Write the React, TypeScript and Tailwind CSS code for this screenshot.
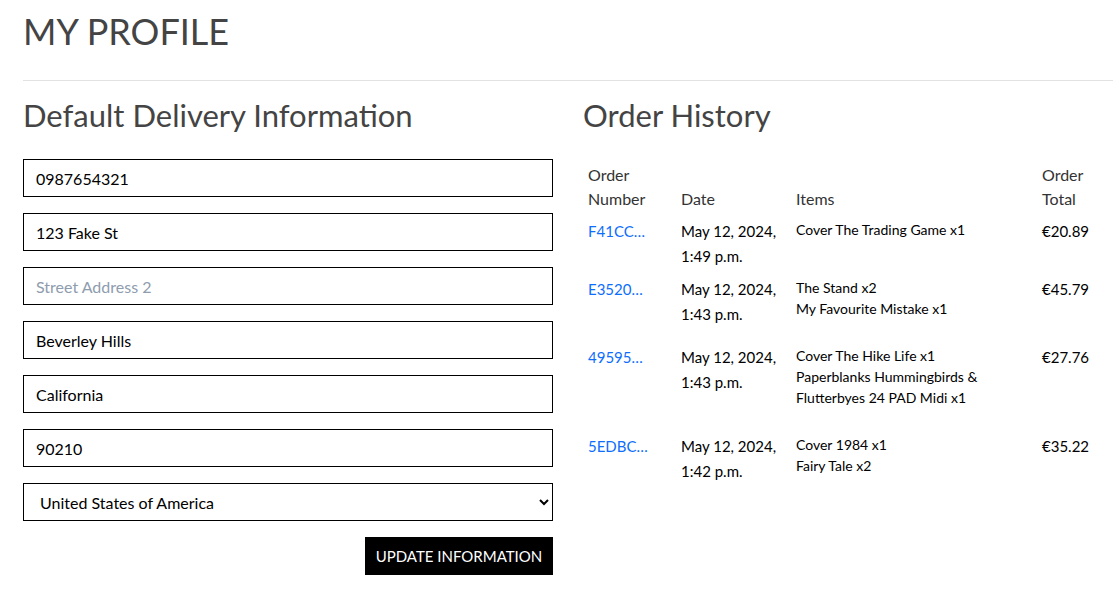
import { useState } from 'react';

const FONT = "font-['Lato','Noto_Sans',sans-serif]";

const orders = [
  { id: 'F41CC…', date: 'May 12, 2024,', time: '1:49 p.m.', items: ['Cover The Trading Game x1'], total: '€20.89' },
  { id: 'E3520…', date: 'May 12, 2024,', time: '1:43 p.m.', items: ['The Stand x2', 'My Favourite Mistake x1'], total: '€45.79' },
  {
    id: '49595…',
    date: 'May 12, 2024,',
    time: '1:43 p.m.',
    items: ['Cover The Hike Life x1', 'Paperblanks Hummingbirds &', 'Flutterbyes 24 PAD Midi x1'],
    total: '€27.76',
  },
  { id: '5EDBC…', date: 'May 12, 2024,', time: '1:42 p.m.', items: ['Cover 1984 x1', 'Fairy Tale x2'], total: '€35.22' },
];

function Field({ value, placeholder }: { value?: string; placeholder?: string }) {
  const [v, setV] = useState(value ?? '');
  return (
    <input
      value={v}
      placeholder={placeholder}
      onChange={(e) => setV(e.target.value)}
      className="h-[38px] w-full border border-black bg-white px-3 text-[16px] text-black outline-none placeholder:text-[#8e9cae]"
    />
  );
}

export default function App() {
  return (
    <div className={`${FONT} min-h-[596px] bg-white pl-[23px] pr-[6px] pt-[8px] text-[#212529]`}>
      <h1 className="text-[36px] leading-[46px] text-[#444]">MY PROFILE</h1>
      <hr className="mt-[26px] border-t border-[#e2e2e2]" />

      <div className="mt-[13px] grid grid-cols-2 gap-[30px]">
        <section>
          <h2 className="text-[31px] leading-[42px] text-[#444]">Default Delivery Information</h2>
          <form className="mt-[23px] flex flex-col gap-4" onSubmit={(e) => e.preventDefault()}>
            <Field value="0987654321" />
            <Field value="123 Fake St" />
            <Field placeholder="Street Address 2" />
            <Field value="Beverley Hills" />
            <Field value="California" />
            <Field value="90210" />
            <select
              defaultValue="us"
              className="h-[38px] w-full border border-black bg-white pl-3 pr-2 text-[16px] text-black outline-none"
            >
              <option value="us">United States of America</option>
              <option value="ie">Ireland</option>
            </select>
            <div className="flex justify-end">
              <button
                type="submit"
                className="h-[38px] w-[188px] bg-black text-[15px] uppercase text-white"
              >
                Update Information
              </button>
            </div>
          </form>
        </section>

        <section>
          <h2 className="text-[31px] leading-[42px] text-[#444]">Order History</h2>
          <table className="mt-[23px] w-full table-fixed border-collapse text-left">
            <colgroup>
              <col className="w-[93px]" />
              <col className="w-[115px]" />
              <col className="w-[246px]" />
              <col />
            </colgroup>
            <thead>
              <tr className="align-bottom text-[16px] leading-[24px] text-[#333]">
                <th className="px-[5px] py-1 font-normal">Order<br />Number</th>
                <th className="px-[5px] py-1 font-normal">Date</th>
                <th className="px-[5px] py-1 font-normal">Items</th>
                <th className="px-[5px] py-1 font-normal">Order<br />Total</th>
              </tr>
            </thead>
            <tbody>
              {orders.map((o) => (
                <tr key={o.id} className="align-top">
                  <td className="px-[5px] py-1 text-[15px] leading-[25px]">
                    <a href="#" className="text-[#0d6efd]">{o.id}</a>
                  </td>
                  <td className="px-[5px] py-1 text-[15px] leading-[25px] text-black">
                    {o.date}<br />{o.time}
                  </td>
                  <td className="px-[5px] py-1 text-[14px] leading-[21px] text-black">
                    <div className="mb-[18px]">
                      {o.items.map((l) => (
                        <span key={l} className="block">{l}</span>
                      ))}
                    </div>
                  </td>
                  <td className="px-[5px] py-1 text-[15px] leading-[25px] text-black">{o.total}</td>
                </tr>
              ))}
            </tbody>
          </table>
        </section>
      </div>
    </div>
  );
}
